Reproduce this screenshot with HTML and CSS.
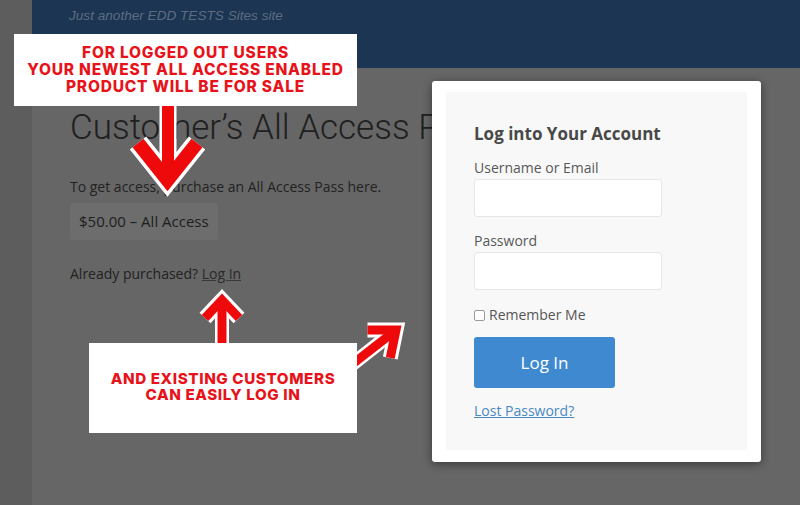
FILE: index.html
```html
<!DOCTYPE html>
<html>
<head>
<meta charset="utf-8">
<link rel="stylesheet" href="styles.css">
</head>
<body>
<div class="page">
  <div class="edge"></div>
  <div class="main">
    <header class="site-header">
      <p class="tagline">Just another EDD TESTS Sites site</p>
    </header>
    <section class="content">
      <h1 class="title">Customer’s All Access Product</h1>
      <p class="intro">To get access, purchase an All Access Pass here.</p>
      <span class="price-btn">$50.00 – All Access</span>
      <p class="already">Already purchased? <a class="login-link">Log In</a></p>
    </section>
  </div>
</div>

<div class="modal">
  <div class="modal-inner">
    <h2 class="modal-title">Log into Your Account</h2>
    <label class="field-label">Username or Email</label>
    <div class="input"></div>
    <label class="field-label">Password</label>
    <div class="input"></div>
    <div class="remember"><span class="checkbox"></span>Remember Me</div>
    <div class="submit">Log In</div>
    <a class="lost">Lost Password?</a>
  </div>
</div>

<svg class="arrows" width="800" height="505" viewBox="0 0 800 505">
  <g fill="none" stroke="#ffffff" stroke-linejoin="miter" stroke-miterlimit="10" stroke-linecap="butt">
    <line x1="168" y1="100" x2="168" y2="180" stroke-width="17"/>
    <polyline points="138,143 167.5,180 197,143" stroke-width="21"/>
    <line x1="222" y1="350" x2="222" y2="302" stroke-width="14"/>
    <polyline points="205,318 222,300 239,318" stroke-width="15"/>
    <line x1="350" y1="366" x2="392" y2="333" stroke-width="14"/>
    <polyline points="367.5,329.9 396,330 390.3,357.9" stroke-width="15"/>
  </g>
  <g fill="none" stroke="#ee0a0a" stroke-linejoin="miter" stroke-miterlimit="10" stroke-linecap="butt">
    <line x1="168" y1="100" x2="168" y2="178" stroke-width="12"/>
    <polyline points="138,143 167.5,180 197,143" stroke-width="14"/>
    <line x1="222" y1="350" x2="222" y2="304" stroke-width="9"/>
    <polyline points="205,318 222,300 239,318" stroke-width="9"/>
    <line x1="350" y1="366" x2="391" y2="334" stroke-width="9"/>
    <polyline points="367.5,329.9 396,330 390.3,357.9" stroke-width="9"/>
  </g>
</svg>

<div class="callout callout-top">FOR LOGGED OUT USERS<br>YOUR NEWEST ALL ACCESS ENABLED<br>PRODUCT WILL BE FOR SALE</div>
<div class="callout callout-bottom">AND EXISTING CUSTOMERS<br>CAN EASILY LOG IN</div>
</body>
</html>
```

FILE: styles.css
```css
* { box-sizing: border-box; }
html, body { margin: 0; padding: 0; }
body {
  width: 800px;
  height: 505px;
  overflow: hidden;
  background: #5d5d5d;
  font-family: "Open Sans", "Liberation Sans", sans-serif;
  position: relative;
}
.page {
  display: flex;
  height: 505px;
}
.edge {
  width: 32px;
  flex: none;
  background: #5d5d5d;
}
.main {
  flex: 1;
  display: flex;
  flex-direction: column;
  background: #666666;
  overflow: hidden;
}
.site-header {
  height: 68px;
  flex: none;
  background: #1b3552;
  padding: 6px 0 0 37px;
}
.tagline {
  margin: 0;
  font-family: "Liberation Sans", Arial, sans-serif;
  font-style: italic;
  font-size: 13.6px;
  line-height: 20px;
  color: #5d6d81;
}
.content {
  padding: 39px 0 0 38px;
  display: flex;
  flex-direction: column;
  align-items: flex-start;
}
.title {
  margin: 0;
  max-width: 362px;
  overflow: hidden;
  font-family: Roboto, "Liberation Sans", sans-serif;
  font-weight: 300;
  font-size: 35px;
  line-height: 42px;
  color: #202020;
  white-space: nowrap;
}
.intro {
  margin: 28px 0 0 0;
  font-size: 14px;
  line-height: 20px;
  color: #222;
}
.price-btn {
  margin-top: 6px;
  display: inline-block;
  background: #6d6d6d;
  border-radius: 3px;
  padding: 0 9px;
  height: 37px;
  line-height: 37px;
  font-size: 15px;
  color: #1e1e1e;
}
.already {
  margin: 24px 0 0 0;
  font-size: 14px;
  line-height: 20px;
  color: #222;
}
.login-link {
  color: #2a2a2a;
  text-decoration: underline;
  text-decoration-color: #3a3a3a;
}

/* modal */
.modal {
  position: absolute;
  left: 432px;
  top: 81px;
  width: 329px;
  height: 381px;
  background: #ffffff;
  border-radius: 3px;
  box-shadow: 0 2px 10px rgba(0,0,0,0.45);
  padding: 11px 14px 12px 14px;
}
.modal-inner {
  background: #f8f8f8;
  height: 100%;
  padding: 31px 28px 0 28px;
  display: flex;
  flex-direction: column;
  align-items: flex-start;
}
.modal-title {
  margin: 0 0 14px 0;
  font-size: 17px;
  font-weight: 700;
  line-height: 22px;
  color: #484848;
}
.field-label {
  font-size: 14px;
  line-height: 18px;
  color: #595959;
  margin-bottom: 2px;
}
.input {
  width: 188px;
  height: 38px;
  background: #fff;
  border: 1px solid #e6e6e6;
  border-radius: 3px;
  margin-bottom: 15px;
}
.remember {
  margin-top: 1px;
  display: flex;
  align-items: center;
  font-size: 14px;
  line-height: 18px;
  color: #555;
}
.checkbox {
  width: 11px;
  height: 11px;
  border: 1px solid #9a9a9a;
  border-radius: 2px;
  background: #fff;
  margin-right: 4px;
}
.submit {
  margin-top: 13px;
  width: 141px;
  height: 51px;
  line-height: 51px;
  text-align: center;
  background: #3e89cf;
  border-radius: 3px;
  color: #fff;
  font-size: 17px;
}
.lost {
  margin-top: 14px;
  font-size: 14px;
  line-height: 18px;
  color: #4a88c2;
  text-decoration: underline;
}

/* annotations */
.arrows {
  position: absolute;
  left: 0;
  top: 0;
  pointer-events: none;
}
.callout {
  position: absolute;
  background: #ffffff;
  color: #e8121a;
  font-family: Inter, "Open Sans", sans-serif;
  font-weight: 800;
  font-size: 15.5px;
  line-height: 17px;
  text-align: center;
  letter-spacing: 0.8px;
}
.callout-top {
  left: 14px;
  top: 34px;
  width: 343px;
  height: 72px;
  padding-top: 10px;
}
.callout-bottom {
  left: 89px;
  top: 343px;
  width: 268px;
  height: 90px;
  padding-top: 28px;
  line-height: 16px;
  font-size: 15.2px;
  letter-spacing: 0.6px;
}
```
